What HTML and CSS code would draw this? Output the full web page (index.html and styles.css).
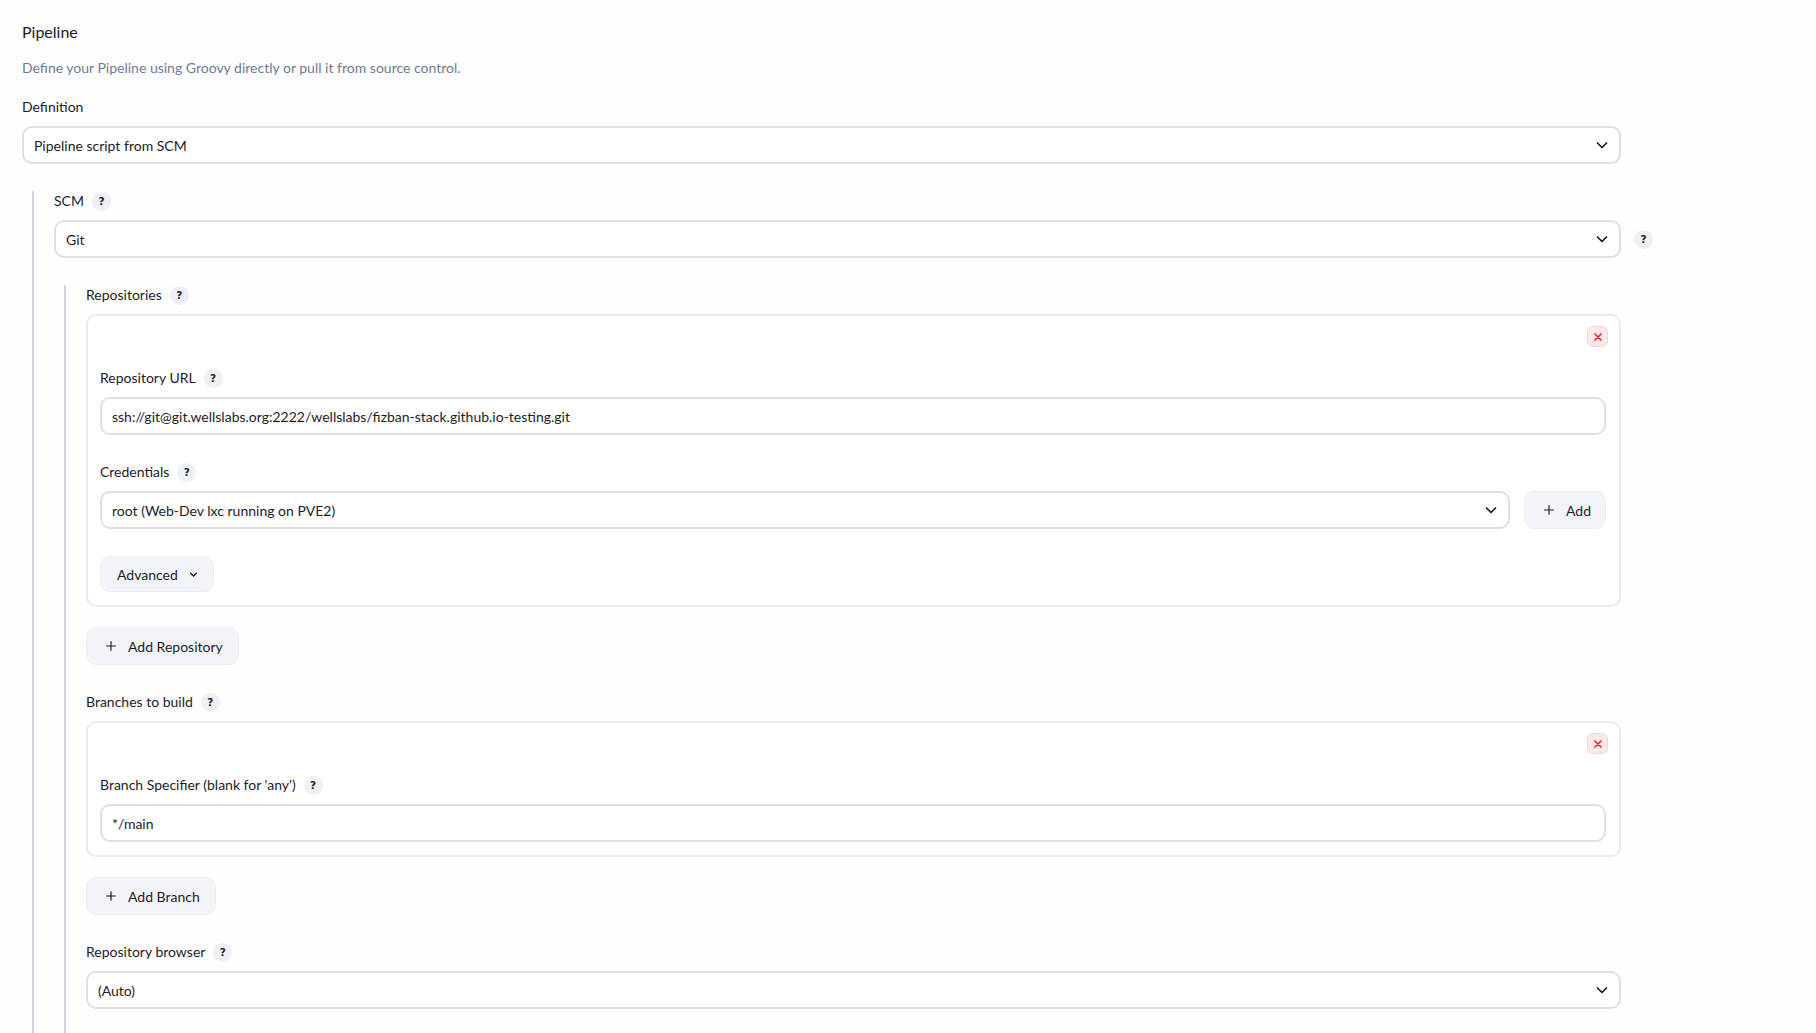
FILE: index.html
```html
<!DOCTYPE html>
<html lang="en">
<head>
<meta charset="utf-8">
<title>Pipeline</title>
<link rel="stylesheet" href="styles.css">
</head>
<body>
<div class="page">
  <div class="section-title">Pipeline</div>
  <div class="section-desc">Define your Pipeline using Groovy directly or pull it from source control.</div>

  <div class="field">
    <div class="label">Definition</div>
    <div class="select"><span>Pipeline script from SCM</span><svg class="chev" viewBox="0 0 16 16"><path d="M3.5 6 8 10.5 12.5 6"/></svg></div>
  </div>

  <div class="nested">
    <div class="field">
      <div class="label">SCM <span class="help">?</span></div>
      <div class="help-row">
        <div class="select grow"><span>Git</span><svg class="chev" viewBox="0 0 16 16"><path d="M3.5 6 8 10.5 12.5 6"/></svg></div>
        <span class="help">?</span>
      </div>
    </div>

    <div class="nested tail">
      <div class="field">
        <div class="label">Repositories <span class="help">?</span></div>
        <div class="card">
          <div class="card-head">
            <span class="del"><svg viewBox="0 0 16 16"><path d="M4.5 4.5l7 7M11.5 4.5l-7 7"/></svg></span>
          </div>
          <div class="field">
            <div class="label">Repository URL <span class="help">?</span></div>
            <div class="input">ssh://git@git.wellslabs.org:2222/wellslabs/fizban-stack.github.io-testing.git</div>
          </div>
          <div class="field">
            <div class="label">Credentials <span class="help">?</span></div>
            <div class="cred-row">
              <div class="select grow"><span>root (Web-Dev lxc running on PVE2)</span><svg class="chev" viewBox="0 0 16 16"><path d="M3.5 6 8 10.5 12.5 6"/></svg></div>
              <span class="btn btn-add"><svg class="plus" viewBox="0 0 16 16"><path d="M8 2.5v11M2.5 8h11"/></svg>Add</span>
            </div>
          </div>
          <span class="btn btn-adv">Advanced<svg class="chev-s" viewBox="0 0 16 16"><path d="M4.5 6.5 8 10 11.5 6.5"/></svg></span>
        </div>
        <span class="btn btn-repo"><svg class="plus" viewBox="0 0 16 16"><path d="M8 2.5v11M2.5 8h11"/></svg>Add Repository</span>
      </div>

      <div class="field">
        <div class="label">Branches to build <span class="help">?</span></div>
        <div class="card">
          <div class="card-head">
            <span class="del"><svg viewBox="0 0 16 16"><path d="M4.5 4.5l7 7M11.5 4.5l-7 7"/></svg></span>
          </div>
          <div class="field last">
            <div class="label">Branch Specifier (blank for 'any') <span class="help">?</span></div>
            <div class="input">*/main</div>
          </div>
        </div>
        <span class="btn btn-repo"><svg class="plus" viewBox="0 0 16 16"><path d="M8 2.5v11M2.5 8h11"/></svg>Add Branch</span>
      </div>

      <div class="field last">
        <div class="label">Repository browser <span class="help">?</span></div>
        <div class="select"><span>(Auto)</span><svg class="chev" viewBox="0 0 16 16"><path d="M3.5 6 8 10.5 12.5 6"/></svg></div>
      </div>
    </div>
  </div>
</div>
</body>
</html>
```

FILE: styles.css
```css
* { box-sizing: border-box; }
html, body {
  margin: 0;
  background: #fefefe;
}
body {
  font-family: Lato, "Open Sans", sans-serif;
  font-size: 14px;
  color: #1c1c28;
  overflow: hidden;
}
.page {
  width: 1621px;
  padding: 21px 0 0 22px;
}
.section-title {
  font-size: 16px;
  line-height: 22px;
  margin-bottom: 15px;
}
.section-desc {
  line-height: 20px;
  color: #6c7b98;
  margin-bottom: 19px;
}
.field {
  margin-bottom: 27px;
}
.field.last { margin-bottom: 0; }
.label {
  display: flex;
  align-items: center;
  gap: 8px;
  line-height: 20px;
  height: 20px;
  margin-bottom: 9px;
}
.help {
  display: inline-flex;
  align-items: center;
  justify-content: center;
  width: 19px;
  height: 19px;
  border-radius: 50%;
  background: #eef0f3;
  font-size: 10.5px;
  font-weight: 700;
  color: #23232f;
  font-family: "DejaVu Sans", sans-serif;
}
.select, .input {
  height: 38px;
  border: 2px solid #dcdfe6;
  border-radius: 10px;
  background: #fff;
  display: flex;
  align-items: center;
  padding: 0 10px;
  white-space: nowrap;
}
.select span { flex: 1; }
.chev {
  width: 16px;
  height: 16px;
  margin-right: -1px;
  fill: none;
  stroke: #1c1c28;
  stroke-width: 1.7;
  stroke-linecap: round;
  stroke-linejoin: round;
}
.nested {
  margin-left: 10px;
  border-left: 2px solid #c8d3df;
  padding-left: 20px;
}
.nested.tail {
  padding-bottom: 24px;
}
.help-row {
  display: flex;
  align-items: center;
  gap: 13px;
  margin-right: -32px;
}
.grow { flex: 1; }
.card {
  border: 2px solid #e8eaee;
  border-radius: 10px;
  background: #fff;
  padding: 10px 13px 13px 12px;
  margin-bottom: 20px;
}
.card-head {
  display: flex;
  justify-content: flex-end;
  height: 22px;
  margin-right: -2px;
  margin-bottom: 20px;
}
.del {
  width: 21px;
  height: 21px;
  border-radius: 6px;
  background: #fde9ea;
  border: 1px solid #f8d3d6;
  display: flex;
  align-items: center;
  justify-content: center;
}
.del svg {
  width: 14px;
  height: 14px;
  fill: none;
  stroke: #e3242d;
  stroke-width: 1.8;
  stroke-linecap: round;
}
.cred-row {
  display: flex;
  gap: 14px;
}
.btn {
  display: inline-flex;
  align-items: center;
  height: 38px;
  border-radius: 10px;
  background: #f2f4f7;
  border: 1px solid #eceef2;
  white-space: nowrap;
}
.plus {
  width: 14px;
  height: 14px;
  fill: none;
  stroke: #1c1c28;
  stroke-width: 1.3;
  margin-right: 10px;
}
.btn-add {
  width: 82px;
  padding-left: 17px;
}
.btn-adv {
  width: 114px;
  height: 36px;
  padding-left: 16px;
}
.chev-s {
  width: 13px;
  height: 13px;
  margin-left: 9px;
  fill: none;
  stroke: #1c1c28;
  stroke-width: 1.7;
  stroke-linecap: round;
  stroke-linejoin: round;
}
.btn-repo {
  padding: 0 15px 0 17px;
  margin-bottom: 0;
}
```
